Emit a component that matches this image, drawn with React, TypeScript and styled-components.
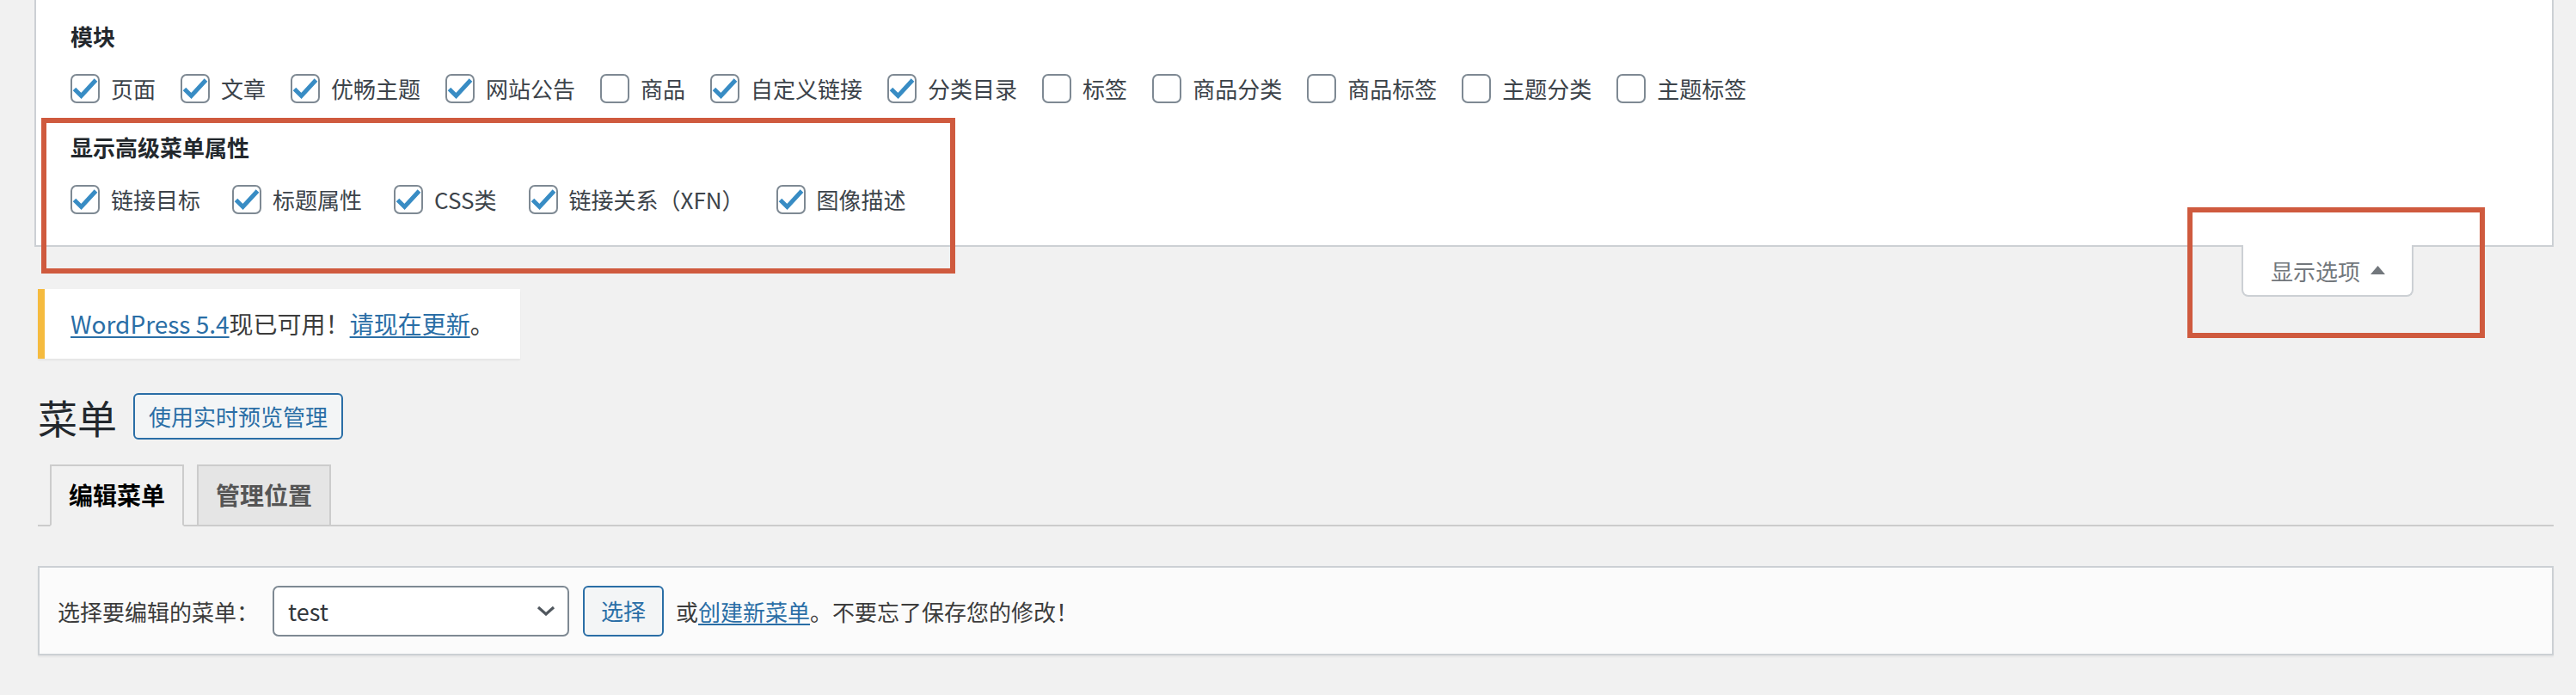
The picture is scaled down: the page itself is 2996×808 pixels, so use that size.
import React from "react";
import styled, { createGlobalStyle } from "styled-components";

const GlobalStyle = createGlobalStyle`
  html, body {
    margin: 0;
    padding: 0;
    background: #f1f1f1;
    overflow: hidden;
  }
  body {
    font-family: "Noto Sans CJK SC", "Noto Sans", sans-serif;
    color: #3c434a;
  }
  * { box-sizing: border-box; }
`;

const Page = styled.div`
  position: relative;
  width: 2996px;
  height: 808px;
  padding: 0 26px 0 40px;
`;

const ScreenMeta = styled.div`
  background: #fff;
  border: 2px solid #ccd0d4;
  border-top: none;
  padding: 22px 40px 22px;
`;

const Fieldset = styled.div<{ $mt?: number }>`
  margin-top: ${(p) => p.$mt ?? 0}px;
`;

const Legend = styled.div`
  height: 40px;
  line-height: 40px;
  font-size: 26px;
  font-weight: 600;
  color: #23282d;
`;

const OptionRow = styled.div<{ $gap: number }>`
  display: flex;
  align-items: center;
  gap: ${(p) => p.$gap}px;
  height: 62px;
  margin-top: 10px;
`;

const OptionLabel = styled.label`
  display: inline-flex;
  align-items: center;
  gap: 13px;
  font-size: 26px;
  line-height: 40px;
  color: #3c434a;
  white-space: nowrap;
`;

const Box = styled.span`
  display: inline-flex;
  align-items: center;
  justify-content: center;
  width: 34px;
  height: 34px;
  border: 2px solid #7e8993;
  border-radius: 7px;
  background: #fff;
  flex: none;
`;

const TopRow = styled.div`
  display: flex;
  align-items: flex-start;
  justify-content: space-between;
`;

const UpdateNag = styled.div`
  margin: 49px 0 0 4px;
  background: #fff;
  border-left: 8px solid #f5bb3f;
  box-shadow: 0 2px 2px rgba(0, 0, 0, 0.05);
  padding: 21px 30px;
  font-size: 28px;
  line-height: 39px;
  color: #3c3c3c;
  white-space: nowrap;
`;

const Link = styled.a`
  color: #2a6ea6;
  text-decoration: underline;
  text-underline-offset: 3px;
`;

const ShowSettings = styled.button`
  display: flex;
  align-items: center;
  gap: 12px;
  margin: -2px 163px 0 0;
  width: 200px;
  height: 60px;
  padding: 0 0 0 32px;
  background: #fff;
  border: 2px solid #ccd0d4;
  border-top: none;
  border-radius: 0 0 8px 8px;
  font-family: inherit;
  font-size: 26px;
  color: #72777c;
  cursor: pointer;
`;

const Wrap = styled.div`
  margin-left: 4px;
`;

const TitleRow = styled.div`
  display: flex;
  align-items: center;
  gap: 19px;
  padding-top: 38px;
`;

const Title = styled.h1`
  margin: 0;
  font-size: 46px;
  line-height: 58px;
  font-weight: 400;
  color: #23282d;
`;

const OutlineButton = styled.button<{ $h: number; $px: number }>`
  height: ${(p) => p.$h}px;
  padding: 0 ${(p) => p.$px}px;
  border: 2px solid #2a6ea6;
  border-radius: 6px;
  background: #f3f5f6;
  color: #2a6ea6;
  font-family: inherit;
  font-size: 26px;
  line-height: 1;
  white-space: nowrap;
  cursor: pointer;
`;

const NavTabWrapper = styled.div`
  display: flex;
  padding-top: 27px;
  padding-left: 14px;
  gap: 15px;
  border-bottom: 2px solid #ccc;
`;

const NavTab = styled.a<{ $active?: boolean }>`
  display: block;
  height: 72px;
  margin-bottom: -2px;
  padding: 0 20px;
  border: 2px solid #ccc;
  border-bottom-color: ${(p) => (p.$active ? "#f1f1f1" : "#ccc")};
  background: ${(p) => (p.$active ? "#f1f1f1" : "#e5e5e5")};
  color: ${(p) => (p.$active ? "#000" : "#555")};
  font-size: 28px;
  font-weight: 600;
  line-height: 66px;
  text-decoration: none;
`;

const ManageMenus = styled.div`
  display: flex;
  align-items: center;
  margin-top: 46px;
  height: 104px;
  padding: 0 21px;
  background: #fbfbfb;
  border: 2px solid #ccd0d4;
  box-shadow: 0 2px 2px rgba(0, 0, 0, 0.05);
  font-size: 26px;
  color: #3c3c3c;
  white-space: nowrap;
`;

const SelectBox = styled.div`
  display: flex;
  align-items: center;
  justify-content: space-between;
  width: 345px;
  height: 59px;
  margin: 0 16px;
  padding: 0 14px 0 16px;
  border: 2px solid #7e8993;
  border-radius: 7px;
  background: #fff;
  color: #32373c;
  font-size: 27px;
`;

const Trailing = styled.span`
  margin-left: 14px;
`;

const Annotation = styled.div<{ $x: number; $y: number; $w: number; $h: number }>`
  position: absolute;
  left: ${(p) => p.$x}px;
  top: ${(p) => p.$y}px;
  width: ${(p) => p.$w}px;
  height: ${(p) => p.$h}px;
  border: 6px solid #cf5a3e;
  pointer-events: none;
`;

const Check = () => (
  <svg width="30" height="30" viewBox="0 0 30 30">
    <path
      d="M2.5 15.5 L10.5 23.5 L27.5 5"
      fill="none"
      stroke="#388cc4"
      strokeWidth="5"
      strokeLinejoin="miter"
    />
  </svg>
);

const Option = ({ label, checked }: { label: string; checked: boolean }) => (
  <OptionLabel>
    <Box>{checked && <Check />}</Box>
    {label}
  </OptionLabel>
);

const modules: [string, boolean][] = [
  ["页面", true],
  ["文章", true],
  ["优畅主题", true],
  ["网站公告", true],
  ["商品", false],
  ["自定义链接", true],
  ["分类目录", true],
  ["标签", false],
  ["商品分类", false],
  ["商品标签", false],
  ["主题分类", false],
  ["主题标签", false],
];

const advanced: [string, boolean][] = [
  ["链接目标", true],
  ["标题属性", true],
  ["CSS类", true],
  ["链接关系（XFN）", true],
  ["图像描述", true],
];

export default function App() {
  return (
    <>
      <GlobalStyle />
      <Page>
        <ScreenMeta>
          <Fieldset>
            <Legend>模块</Legend>
            <OptionRow $gap={29}>
              {modules.map(([l, c]) => (
                <Option key={l} label={l} checked={c} />
              ))}
            </OptionRow>
          </Fieldset>
          <Fieldset $mt={17}>
            <Legend>显示高级菜单属性</Legend>
            <OptionRow $gap={37}>
              {advanced.map(([l, c]) => (
                <Option key={l} label={l} checked={c} />
              ))}
            </OptionRow>
          </Fieldset>
        </ScreenMeta>

        <TopRow>
          <UpdateNag>
            <Link href="#">WordPress 5.4</Link>现已可用！<Link href="#">请现在更新</Link>。
          </UpdateNag>
          <ShowSettings>
            显示选项
            <svg width="17" height="10" viewBox="0 0 17 10">
              <polygon points="8.5,0 17,10 0,10" fill="#72777c" />
            </svg>
          </ShowSettings>
        </TopRow>

        <Wrap>
          <TitleRow>
            <Title>菜单</Title>
            <OutlineButton $h={54} $px={16}>使用实时预览管理</OutlineButton>
          </TitleRow>

          <NavTabWrapper>
            <NavTab href="#" $active>编辑菜单</NavTab>
            <NavTab href="#">管理位置</NavTab>
          </NavTabWrapper>

          <ManageMenus>
            <span>选择要编辑的菜单：</span>
            <SelectBox>
              <span>test</span>
              <svg width="22" height="12" viewBox="0 0 22 12">
                <polyline points="2,2 11,10 20,2" fill="none" stroke="#50575e" strokeWidth="3.2" />
              </svg>
            </SelectBox>
            <OutlineButton $h={59} $px={19}>选择</OutlineButton>
            <Trailing>
              或<Link href="#">创建新菜单</Link>。不要忘了保存您的修改！
            </Trailing>
          </ManageMenus>
        </Wrap>

        <Annotation $x={48} $y={137} $w={1063} $h={181} />
        <Annotation $x={2544} $y={241} $w={346} $h={152} />
      </Page>
    </>
  );
}
